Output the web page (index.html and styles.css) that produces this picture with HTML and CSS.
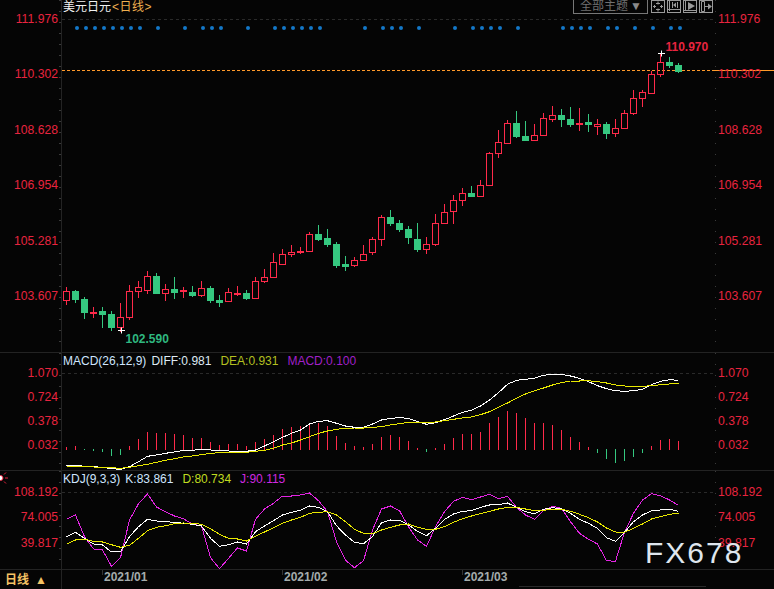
FILE: index.html
```html
<!DOCTYPE html>
<html lang="en">
<head>
    <meta charset="UTF-8">
    <title>美元日元 日线</title>
    <link rel="stylesheet" href="styles.css">
</head>
<body>
    <div class="screen">
        <div class="panel price">
            <div class="axis left">
                <div>111.976</div><div>110.302</div><div>108.628</div><div>106.954</div><div>105.281</div><div>103.607</div>
            </div>
            <div class="plot">
                <svg id="priceChart" viewBox="62 0 653 352" width="653" height="352">
                    <line class="grid" x1="62" y1="19.5" x2="715" y2="19.5"/>
                    <line class="last" x1="62" y1="70.5" x2="715" y2="70.5"/>
                    <g id="signals"></g>
                    <g id="candles"></g>
                    <path class="mark" d="M118 330.5h7M121.5 327.5v6M658 53.5h7M661.5 50.5v6"/>
                    <text class="peak" x="665.5" y="50.5">110.970</text>
                    <text class="low" x="125.5" y="343">102.590</text>
                </svg>
                <div class="legend title">美元日元<span class="tag">&lt;日线&gt;</span></div>
                <div class="toolbar">
                    <div class="theme">全部主题<span class="caret">▼</span></div>
                    <div class="tool">
                        <svg viewBox="0 0 14 13" width="14" height="13"><path d="M7 1.500v3M7 8.500v3M2 6.500h3M9 6.500h3M5 3.500h4M5 9.500h4M3.500 5v3M10.500 5v3"/></svg>
                    </div>
                    <div class="tool">
                        <svg viewBox="0 0 14 13" width="14" height="13"><path d="M2.500 1v10M1 9.500h12M5.500 2v6M10.500 2v6"/><path class="solid" d="M6 5l3-2.500v5z"/></svg>
                    </div>
                    <div class="tool">
                        <svg viewBox="0 0 14 13" width="14" height="13"><path d="M2.500 1v10M1 10.500h12"/><path class="solid" d="M5 2l7 4-7 4z"/></svg>
                    </div>
                    <div class="tool">
                        <svg viewBox="0 0 14 13" width="14" height="13"><path d="M2.500 1.500h3v10h-3zM6 6.500h6"/><path class="solid" d="M9 3.500l4 3-4 3z"/></svg>
                    </div>
                </div>
            </div>
            <div class="axis right"><div>111.976</div><div>110.302</div><div>108.628</div><div>106.954</div><div>105.281</div><div>103.607</div></div>
        </div>

        <div class="panel macd">
            <div class="axis left">
                <div>1.070</div><div>0.724</div><div>0.378</div><div>0.032</div>
            </div>
            <div class="plot">
                <svg id="macdChart" viewBox="62 353 653 117" width="653" height="117">
                    <line class="grid" x1="62" y1="373.500" x2="715" y2="373.500"/>
                </svg>
                <div class="legend">
                    <span class="name">MACD(26,12,9)</span>
                    <span class="white">DIFF:0.981</span>
                    <span class="olive">DEA:0.931</span>
                    <span class="purple">MACD:0.100</span>
                </div>
            </div>
            <div class="axis right"><div>1.070</div><div>0.724</div><div>0.378</div><div>0.032</div></div>
        </div>

        <div class="panel kdj">
            <div class="axis left">
                <svg class="spark" viewBox="0 0 8 14" width="8" height="14">
                    <circle cx="0.500" cy="7" r="2.500" fill="#fff" stroke="#e8203c"/>
                    <path d="M4 3.500l2-2M5 7h3M4 10.500l2 2" stroke="#e8203c" fill="none"/>
                </svg>
                <div>108.192</div><div>74.005</div><div>39.817</div>
            </div>
            <div class="plot">
                <svg id="kdjChart" viewBox="62 471 653 98" width="653" height="98">
                    <line class="grid" x1="62" y1="492.500" x2="715" y2="492.500"/>
                </svg>
                <div class="legend">
                    <span class="name">KDJ(9,3,3)</span>
                    <span class="pale">K:83.861</span>
                    <span class="lime">D:80.734</span>
                    <span class="violet">J:90.115</span>
                </div>
            </div>
            <div class="axis right"><div>108.192</div><div>74.005</div><div>39.817</div></div>
        </div>

        <div class="footer">
            <div class="period">日线<span class="arrow">▲</span></div>
            <div class="dates">
                <div class="month">2021/01</div>
                <div class="month">2021/02</div>
                <div class="month">2021/03</div>
            </div>
            <div class="scrollbar"></div>
        </div>

        <div class="watermark">FX678</div>
    </div>
    <script src="chart.js"></script>
</body>
</html>
```

FILE: styles.css
```css
* {
    box-sizing: border-box;
}
body {
    margin: 0;
    background: #050505;
    font-family: "Liberation Sans", "Noto Sans CJK SC", sans-serif;
    font-size: 12px;
}
.screen {
    position: relative;
    width: 774px;
    height: 589px;
    overflow: hidden;
}
.panel {
    display: flex;
    border-bottom: 1px solid #232323;
}
.price {
    height: 353px;
}
.macd {
    height: 118px;
}
.kdj {
    height: 99px;
}

/* axes */
.axis {
    position: relative;
    display: flex;
    flex-direction: column;
    color: #e8243f;
    font-size: 12.2px;
    line-height: 14px;
}
.axis div {
    height: 14px;
}
.axis.left {
    width: 62px;
    padding-right: 3px;
    border-right: 1px solid #232323;
    text-align: right;
}
.axis.right {
    width: 59px;
    padding-left: 3px;
}
.axis::after {
    content: "";
    position: absolute;
    top: 0;
    bottom: 0;
    width: 2px;
    background: repeating-linear-gradient(#3a3a3a 0 1px, transparent 1px 11px);
}
.axis.left::after {
    right: 0;
}
.axis.right::after {
    left: 0;
    width: 1px;
}
.price .axis {
    padding-top: 12px;
    gap: 41.38px;
}
.macd .axis {
    padding-top: 13px;
    gap: 10px;
}
.kdj .axis {
    padding-top: 14px;
    gap: 11.4px;
}
.spark {
    position: absolute;
    left: 0;
    top: 0;
}

/* chart area */
.plot {
    position: relative;
    width: 653px;
}
.plot > svg {
    display: block;
    overflow: visible;
}
.grid {
    stroke: #2a2a2a;
    stroke-dasharray: 3 3;
}
.last {
    stroke: #ff9a2a;
    stroke-dasharray: 3 2;
}
.last-tail {
    stroke: #ff9a2a;
}
.mark {
    stroke: #fff;
    fill: none;
}
.peak, .low {
    font-size: 12px;
    font-weight: bold;
}
.peak {
    fill: #e8243f;
}
.low {
    fill: #2fb880;
}
.up {
    stroke: #ff2a4a;
    fill: none;
}
.down {
    stroke: #35c880;
    fill: #35c880;
}
.signal {
    fill: #1478c8;
}
.diff, .dea, .k, .d, .j {
    fill: none;
    shape-rendering: crispEdges;
}
.diff, .k {
    stroke: #fff;
}
.dea, .d {
    stroke: #e8e800;
}
.j {
    stroke: #e224e2;
}

/* legends */
.legend {
    position: absolute;
    top: 1px;
    left: 1px;
    display: flex;
    gap: 5px;
    line-height: 14px;
    white-space: nowrap;
}
.title {
    top: 0;
    gap: 0;
    color: #f2f2f2;
}
.tag {
    margin-left: 1px;
    color: #f0b050;
    letter-spacing: 0.5px;
}
.name {
    color: #cfe6ff;
}
.white {
    color: #dfeaf4;
}
.pale {
    color: #cfe6ff;
}
.olive {
    margin-left: 4px;
    color: #b4c020;
}
.lime {
    margin-left: 4px;
    color: #c0dc20;
}
.purple {
    margin-left: 4px;
    color: #a020c8;
}
.violet {
    margin-left: 4px;
    color: #d028e0;
}

/* toolbar */
.toolbar {
    position: absolute;
    top: 0;
    right: 2px;
    display: flex;
    gap: 2px;
}
.theme {
    display: flex;
    align-items: center;
    width: 75px;
    height: 14px;
    margin-right: 1px;
    padding-left: 6px;
    border: 1px solid #777;
    border-top: none;
    color: #707070;
    line-height: 13px;
}
.caret {
    margin-left: 2px;
    color: #8a8a8a;
    font-size: 12px;
}
.tool {
    width: 14px;
    height: 13px;
    outline: 1px solid #9a9a9a;
    outline-offset: -1px;
}
.tool svg {
    display: block;
    fill: none;
    stroke: #9a9a9a;
}
.tool .solid {
    fill: #9a9a9a;
    stroke: none;
}

/* bottom bar */
.footer {
    position: relative;
    display: flex;
    height: 19px;
    line-height: 15px;
}
.period {
    display: flex;
    align-items: center;
    width: 62px;
    padding: 2px 0 0 5px;
    border-right: 1px solid #232323;
    color: #f4c264;
    font-weight: bold;
}
.arrow {
    margin-left: 6px;
    font-size: 12px;
}
.dates {
    display: flex;
    padding-left: 40px;
}
.month {
    width: 180px;
    padding-left: 2px;
    color: #a4acac;
    font-weight: bold;
    background: linear-gradient(#333, #333) left top / 1px 5px no-repeat;
}
.scrollbar {
    position: absolute;
    left: 519px;
    top: 16px;
    width: 187px;
    height: 1px;
    background: #2a2a2a;
}

.watermark {
    position: absolute;
    left: 642px;
    top: 547px;
    width: 120px;
    height: 21px;
    padding-left: 3px;
    background: #050505;
    color: #dfe6ee;
    font-size: 30px;
    letter-spacing: 2px;
    line-height: 11px;
}
```

FILE: chart.js
```js
const SVG_NS = 'http://www.w3.org/2000/svg';
const xAt = i => 66.5 + 9 * i;
const snap = y => Math.round(y) + 0.5;

function add(parent, tag, attrs) {
    const el = document.createElementNS(SVG_NS, tag);
    for (const key in attrs) el.setAttribute(key, attrs[key]);
    parent.appendChild(el);
    return el;
}

// [direction, high, body top, body bottom, low] in page pixels, one per day
const candles = [
    ['u',287,291,300,304], ['d',290,291,299,302], ['d',297,299,312,318], ['u',307,311.5,312,317],
    ['d',307,311,314,327], ['d',311,314,327,330], ['u',303,317,327,331], ['u',285,291,317,319],
    ['u',281,287,291,297], ['u',271,276,290,293], ['d',273,276,293,293], ['u',284,289,293,300],
    ['d',277,289,292,298], ['u',287,290,291,297], ['d',286,292,295,296], ['u',281,288,295,296],
    ['d',286,288,300,302], ['d',295,300,302,306], ['u',288,292,301,301], ['u',286,293,294,295],
    ['d',290,293,298,299], ['u',277,281,298,298], ['u',269,277,281,282], ['u',253,262,277,277],
    ['u',249,254,264,264], ['u',245,252,254,256], ['u',247,251,252,253], ['u',232,234,251,251],
    ['d',225,234,239,240], ['d',229,238,244,246], ['d',242,244,265,267], ['d',256,264,266,270],
    ['u',257,260,265,266], ['u',245,254,260,260], ['u',237,239,252,254], ['u',215,217,239,245],
    ['d',210,217,223,225], ['d',220,223,229,231], ['d',226,229,237,243], ['d',223,239,249,251],
    ['u',237,244,249,253], ['u',214,223,244,245], ['u',204,212,223,223], ['u',195,200,211,223],
    ['u',188,193,200,205], ['d',186,193,196,196], ['u',180,185,196,196], ['u',152,153,185,185],
    ['u',130,142,153,157], ['u',120,123,143,143], ['d',111,123,136,137], ['d',121,136,140,140],
    ['u',124,135,140,140], ['u',113,118,135,135], ['u',106,115,119,121], ['d',109,115,119,126],
    ['d',107,119,124,126], ['u',108,123,124,130], ['d',114,122,124,131], ['u',119,124,126,134],
    ['d',122,124,133,138], ['u',119,128,133,136], ['u',110,113,128,128], ['u',90,98,113,114],
    ['u',90,92,98,106], ['u',71,74,93,93], ['u',53,62,74,76], ['d',57,62,65,67], ['d',63,65,71,72]
];

const signalDays = [77, 86, 95, 104, 113, 122, 131, 140, 158, 185, 203, 212, 221, 248, 275, 284, 293, 302,
    311, 320, 365, 383, 392, 401, 419, 455, 473, 482, 491, 500, 518, 563, 572, 581, 590, 608, 617, 635, 653, 671, 680];

// indicator samples were read off at 3x scale, so they are y = panelTop + v / 3
const macdTop = 350;
const bars = [290,288,301,303,306,318,314,288,266,245,248,249,252,255,264,264,276,285,282,282,288,276,267,255,237,232,
    228,218,219,228,258,279,288,291,282,261,255,260,273,294,305,294,282,264,252,252,246,219,201,183,189,204,219,219,225,
    240,261,276,291,309,327,339,333,321,309,288,270,267,273];
const diff = [347,346,349,350,352,356,358,350,335,319,315,310,306,301,301,298,300,302,303,304,304,300,288,275,262,250,
    240,222,214,212,220,228,232,232,222,210,205,203,205,215,223,218,209,198,187,181,168,150,128,103,91,88,85,76,73,73,78,
    85,95,107,116,122,124,122,118,104,94,89,91];
const dea = [348,349,350,351,352,353,355,352,347,343,337,331,326,321,318,314,310,308,307,307,307,304,301,295,285,279,
    270,260,250,243,238,235,234,234,232,230,225,221,217,217,217,216,212,208,204,201,194,185,172,159,145,132,122,114,105,
    98,93,93,92,95,99,105,108,109,109,107,104,102,100];

const kdjTop = 470;
const k = [200,187,205,222,225,246,245,200,170,148,153,155,157,160,163,168,205,229,224,216,222,185,168,152,135,127,121,
    108,112,125,167,195,217,221,200,158,150,151,165,184,197,175,148,132,124,122,112,105,104,99,112,125,131,118,113,117,
    130,148,160,175,203,214,187,155,135,122,120,118,124];
const d = [223,210,208,214,216,224,232,226,205,182,172,167,161,159,160,163,176,193,205,207,213,199,186,173,160,150,142,
    130,127,125,135,155,178,190,191,180,172,165,162,172,178,178,170,157,146,138,131,124,117,112,112,117,122,121,118,118,
    124,133,143,156,174,186,187,175,162,147,140,133,130];
const j = [148,135,200,237,240,289,263,150,101,72,111,125,138,146,163,167,263,296,265,234,243,148,117,100,78,78,75,69,
    92,125,215,271,293,272,180,117,108,122,170,210,229,170,125,94,82,89,81,73,86,79,112,135,148,122,109,115,155,190,208,
    222,272,274,187,130,90,71,77,90,106];

function drawCandles() {
    const group = document.getElementById('candles');
    candles.forEach(([dir, high, top, bottom, low], i) => {
        const x = xAt(i);
        const yTop = snap(top);
        const yBottom = Math.max(snap(bottom), yTop + 1);
        const cls = dir === 'u' ? 'up' : 'down';
        add(group, 'path', {
            class: cls,
            'shape-rendering': 'crispEdges',
            d: `M${x} ${Math.round(high)}V${yTop}M${x} ${yBottom}V${Math.round(low) + 1}`
        });
        add(group, 'rect', {
            class: cls,
            'shape-rendering': 'crispEdges',
            x: x - 3,
            y: yTop,
            width: 6,
            height: yBottom - yTop
        });
    });
}

function drawSignals() {
    const group = document.getElementById('signals');
    signalDays.forEach(x => {
        add(group, 'circle', { class: 'signal', cx: x, cy: 28, r: 2 });
    });
}

function drawLine(svg, cls, top, samples) {
    const points = samples.map((v, i) => xAt(i) + ',' + (top + v / 3).toFixed(1));
    add(svg, 'polyline', { class: cls, points: points.join(' ') });
}

function drawBars(svg) {
    bars.forEach((v, i) => {
        const y = macdTop + v / 3;
        const falling = v > 300;
        add(svg, 'line', {
            class: falling ? 'down' : 'up',
            'shape-rendering': 'crispEdges',
            x1: xAt(i),
            x2: xAt(i),
            y1: falling ? 449 : 450,
            y2: y
        });
    });
}

const priceChart = document.getElementById('priceChart');
const macdChart = document.getElementById('macdChart');
const kdjChart = document.getElementById('kdjChart');

add(priceChart, 'line', { class: 'last-tail', x1: 715, x2: 774, y1: 70.5, y2: 70.5 });
drawSignals();
drawCandles();
drawBars(macdChart);
drawLine(macdChart, 'diff', macdTop, diff);
drawLine(macdChart, 'dea', macdTop, dea);
drawLine(kdjChart, 'j', kdjTop, j);
drawLine(kdjChart, 'k', kdjTop, k);
drawLine(kdjChart, 'd', kdjTop, d);
```
